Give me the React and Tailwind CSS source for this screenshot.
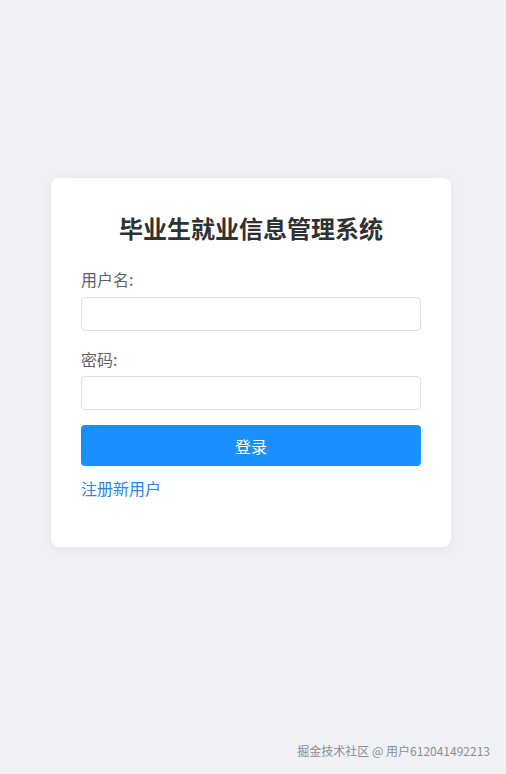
import React, { useState } from 'react'

function App() {
  const [username, setUsername] = useState('');
  const [password, setPassword] = useState('');

  return (
    <div
      className="relative min-h-[774px] w-full bg-[#eff1f5] pt-[178px]"
      style={{ fontFamily: '"Noto Sans CJK SC", "Noto Sans", sans-serif' }}
    >
      <div className="ml-[51px] w-[400px] rounded-lg bg-white px-[30px] pt-[34px] pb-[48px] shadow-[0_2px_12px_rgba(0,0,0,0.06)]">
        <h2 className="text-center text-[24px] font-bold leading-[32px] text-[#303133]">
          毕业生就业信息管理系统
        </h2>

        <div className="mt-[24px]">
          <label className="block text-[16px] leading-[22px] text-[#606266]">用户名:</label>
          <input
            type="text"
            value={username}
            onChange={(e) => setUsername(e.target.value)}
            className="mt-[7px] block h-[34px] w-full rounded border border-[#dcdfe6] bg-white px-3 text-sm outline-none"
          />
        </div>

        <div className="mt-[17px]">
          <label className="block text-[16px] leading-[22px] text-[#606266]">密码:</label>
          <input
            type="password"
            value={password}
            onChange={(e) => setPassword(e.target.value)}
            className="mt-[6px] block h-[34px] w-full rounded border border-[#dcdfe6] bg-white px-3 text-sm outline-none"
          />
        </div>

        <button className="mt-[15px] block h-[41px] w-full rounded bg-[#1890ff] text-[16px] text-white">
          登录
        </button>

        <a href="#" className="mt-[11px] block text-[16px] leading-[22px] text-[#2b85e4]">
          注册新用户
        </a>
      </div>

      <div className="absolute bottom-[14px] right-[16px] text-[12px] leading-[18px] text-[#8a8d93]">
        掘金技术社区 @ 用户612041492213
      </div>
    </div>
  )
}

export default App
